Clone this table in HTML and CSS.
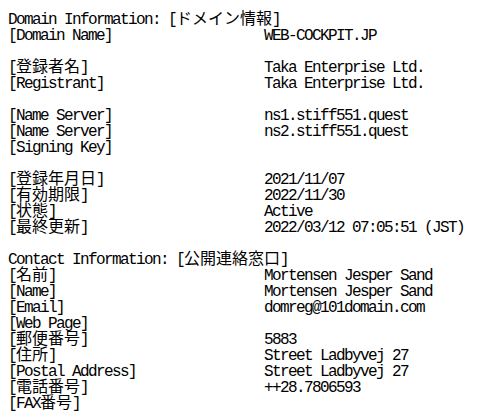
FILE: index.html
```html
<!DOCTYPE html>
<html lang="ja">
<head>
<meta charset="utf-8">
<title>WHOIS</title>
<link rel="stylesheet" href="styles.css">
</head>
<body>
<div class="whois">
  <div class="row head">Domain Information: [<span class="jp">ドメイン情報</span>]</div>
  <div class="row"><span class="label">[Domain Name]</span><span class="value">WEB-COCKPIT.JP</span></div>
  <div class="gap"></div>
  <div class="row"><span class="label">[<span class="jp">登録者名</span>]</span><span class="value">Taka Enterprise Ltd.</span></div>
  <div class="row"><span class="label">[Registrant]</span><span class="value">Taka Enterprise Ltd.</span></div>
  <div class="gap"></div>
  <div class="row"><span class="label">[Name Server]</span><span class="value">ns1.stiff551.quest</span></div>
  <div class="row"><span class="label">[Name Server]</span><span class="value">ns2.stiff551.quest</span></div>
  <div class="row"><span class="label">[Signing Key]</span><span class="value"></span></div>
  <div class="gap"></div>
  <div class="row"><span class="label">[<span class="jp">登録年月日</span>]</span><span class="value">2021/11/07</span></div>
  <div class="row"><span class="label">[<span class="jp">有効期限</span>]</span><span class="value">2022/11/30</span></div>
  <div class="row"><span class="label">[<span class="jp">状態</span>]</span><span class="value">Active</span></div>
  <div class="row"><span class="label">[<span class="jp">最終更新</span>]</span><span class="value">2022/03/12 07:05:51 (JST)</span></div>
  <div class="gap"></div>
  <div class="row head">Contact Information: [<span class="jp">公開連絡窓口</span>]</div>
  <div class="row"><span class="label">[<span class="jp">名前</span>]</span><span class="value">Mortensen Jesper Sand</span></div>
  <div class="row"><span class="label">[Name]</span><span class="value">Mortensen Jesper Sand</span></div>
  <div class="row"><span class="label">[Email]</span><span class="value">domreg@101domain.com</span></div>
  <div class="row"><span class="label">[Web Page]</span><span class="value"></span></div>
  <div class="row"><span class="label">[<span class="jp">郵便番号</span>]</span><span class="value">5883</span></div>
  <div class="row"><span class="label">[<span class="jp">住所</span>]</span><span class="value">Street Ladbyvej 27</span></div>
  <div class="row"><span class="label">[Postal Address]</span><span class="value">Street Ladbyvej 27</span></div>
  <div class="row"><span class="label">[<span class="jp">電話番号</span>]</span><span class="value">++28.7806593</span></div>
  <div class="row"><span class="label">[FAX<span class="jp">番号</span>]</span><span class="value"></span></div>
</div>
</body>
</html>
```

FILE: styles.css
```css
html, body {
  margin: 0;
  padding: 0;
  background: #ffffff;
}

body {
  padding: 12px 8px 0 8px;
}

.whois {
  display: flex;
  flex-direction: column;
  font-family: "Liberation Mono", "Noto Sans CJK JP", monospace;
  font-size: 16px;
  line-height: 16px;
  letter-spacing: -1.6px;
  color: #000000;
  white-space: pre;
}

.row {
  display: grid;
  grid-template-columns: 256px 1fr;
  height: 16px;
}

.row.head {
  display: block;
}

.label,
.value {
  display: block;
  height: 16px;
}

.gap {
  height: 16px;
}

.jp {
  font-family: "Noto Sans CJK JP", sans-serif;
  font-size: 16px;
  line-height: 0;
  letter-spacing: 0;
}
```
